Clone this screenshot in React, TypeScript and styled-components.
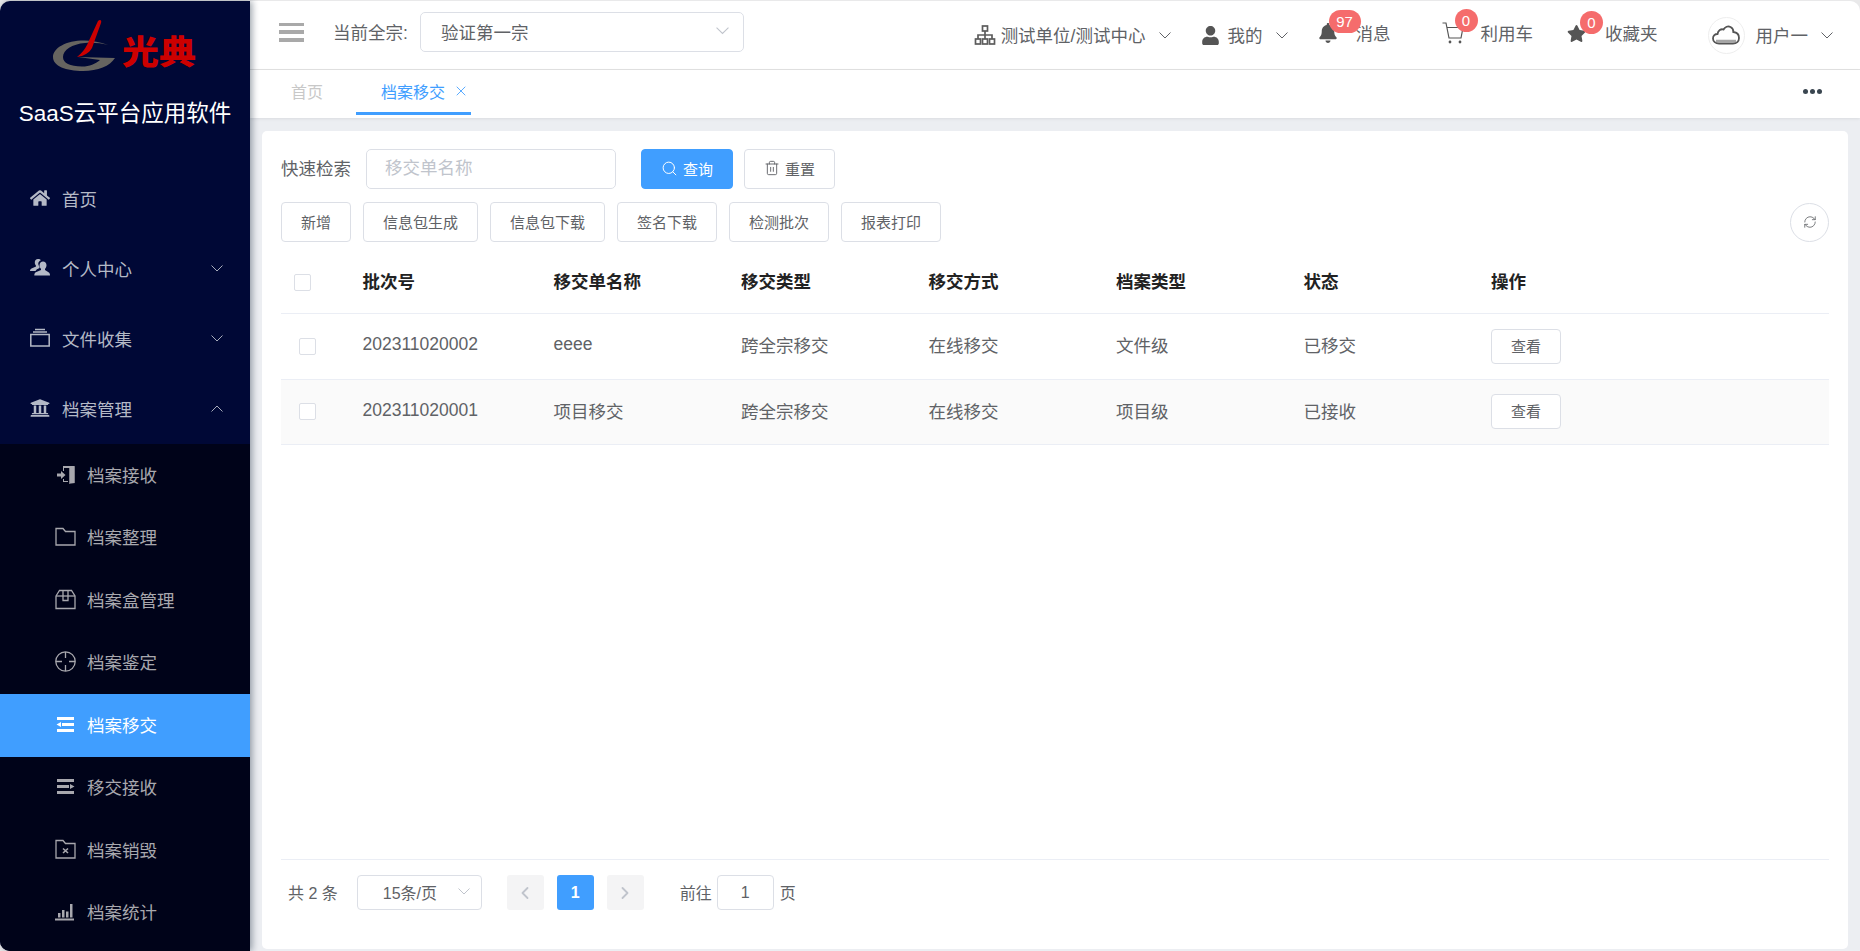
import React from 'react'
import styled, { createGlobalStyle } from 'styled-components'
import { Search, Trash2, RefreshCw, X, ChevronLeft, ChevronRight } from 'lucide-react'
import { FaHome, FaUniversity, FaUser, FaBell, FaStar } from 'react-icons/fa'

const Global = createGlobalStyle`
  html, body { margin: 0; padding: 0; height: 100%; overflow: hidden; background: #e9e9ea; }
  #root { height: 100%; }
  * { box-sizing: border-box; }
  body { font-family: "Liberation Sans", "Noto Sans CJK SC", sans-serif; }
  input { font-family: inherit; }
`

const Page = styled.div`
  display: flex;
  width: 1860px;
  height: 951px;
  padding-top: 1px;
`

const Side = styled.aside`
  position: relative;
  z-index: 2;
  width: 250px;
  flex: none;
  background: #000836;
  border-radius: 10px 0 0 10px;
  box-shadow: 2px 0 7px rgba(0, 21, 41, 0.4);
  overflow: hidden;
  display: flex;
  flex-direction: column;
`

const LogoRow = styled.div`
  height: 74px;
  padding: 17px 0 0 53px;
  display: flex;
  align-items: flex-start;
`

const LogoWord = styled.span`
  display: inline-block;
  margin: 12px 0 0 2px;
  font-size: 33px;
  line-height: 40px;
  font-weight: 900;
  color: #cc0000;
  transform: scaleX(1.12);
  transform-origin: left center;
  font-family: "Noto Sans CJK SC", sans-serif;
`

const Title = styled.div`
  height: 89px;
  padding-top: 24px;
  text-align: center;
  font-size: 22.5px;
  line-height: 30px;
  color: #fff;
`

const MenuItem = styled.div`
  height: 70px;
  padding: 0 27px 2px 30px;
  display: flex;
  align-items: center;
  font-size: 17.5px;
  color: #b4b9c6;
  svg.lead { width: 20px; height: 20px; margin-right: 12px; flex: none; }
`

const Arrow = styled.span`
  margin-left: auto;
  display: flex;
  color: #a7acbb;
`

const SubMenu = styled.div`
  flex: 1;
  background: #000319;
`

const SubItem = styled.div<{ $active?: boolean }>`
  height: 62.5px;
  padding: 0 0 2px 55px;
  display: flex;
  align-items: center;
  font-size: 17.5px;
  color: ${p => (p.$active ? '#fff' : '#a8a8ae')};
  background: ${p => (p.$active ? '#409eff' : 'transparent')};
  svg.lead { width: 21px; height: 21px; margin-right: 11px; flex: none; }
`

const Main = styled.main`
  flex: 1;
  min-width: 0;
  display: flex;
  flex-direction: column;
  background: #eceef2;
  border-radius: 0 10px 0 0;
  overflow: hidden;
`

const Header = styled.header`
  height: 69px;
  flex: none;
  display: flex;
  align-items: center;
  padding: 0 27px 6px 29px;
  background: #fff;
  border-bottom: 1px solid #e2e2e2;
  color: #606266;
  font-size: 17.5px;
`

const Burger = styled.div`
  width: 25px;
  height: 19px;
  margin-right: 29px;
  display: flex;
  flex-direction: column;
  justify-content: space-between;
  span { display: block; height: 3.5px; background: #a9a9a9; }
`

const FondLabel = styled.span`
  width: 87px;
  flex: none;
  margin-bottom: 2px;
`

const FondSelect = styled.div`
  width: 324px;
  height: 40px;
  padding: 0 14px 2px 20px;
  display: flex;
  align-items: center;
  justify-content: space-between;
  border: 1px solid #dcdfe6;
  border-radius: 5px;
  color: #606266;
  font-size: 17.5px;
`

const NavGroup = styled.div`
  margin-left: auto;
  display: flex;
  align-items: center;
`

const NavItem = styled.div<{ $ml: number; $iconGap: number; $low?: boolean }>`
  margin-left: ${p => p.$ml}px;
  margin-top: ${p => (p.$low ? '6px' : '2px')};
  display: flex;
  align-items: center;
  gap: ${p => p.$iconGap}px;
  white-space: nowrap;
`

const NavLabel = styled.span`
  margin-bottom: 2px;
`

const ChevronSlot = styled.span<{ $ml: number }>`
  margin-left: ${p => p.$ml}px;
  display: flex;
  color: #606266;
`

const IconBox = styled.span`
  position: relative;
  display: flex;
  color: #555;
`

const Badge = styled.span<{ $wide?: boolean }>`
  position: absolute;
  top: -13px;
  left: ${p => (p.$wide ? '11px' : '13px')};
  min-width: ${p => (p.$wide ? '32px' : '23px')};
  height: 23px;
  padding: 0 4px;
  border-radius: 12px;
  background: #f56c6c;
  color: #fff;
  font-size: 15px;
  line-height: 23px;
  text-align: center;
`

const Avatar = styled.span`
  width: 37px;
  height: 37px;
  border: 1px solid #eeeeee;
  border-radius: 50%;
  display: flex;
  align-items: center;
  justify-content: center;
`

const Tabs = styled.nav`
  position: relative;
  height: 48px;
  flex: none;
  padding: 0 38px 0 41px;
  display: flex;
  align-items: flex-start;
  background: #fff;
  box-shadow: 0 1px 3px rgba(0, 0, 0, 0.08);
  font-size: 16px;
`

const Tab = styled.div<{ $active?: boolean }>`
  height: 45px;
  padding: ${p => (p.$active ? '0 2px 0 25px' : '0')};
  margin-left: ${p => (p.$active ? '33px' : '0')};
  display: flex;
  align-items: center;
  gap: 8px;
  color: ${p => (p.$active ? '#409eff' : '#c8c8c8')};
  border-bottom: 3px solid ${p => (p.$active ? '#409eff' : 'transparent')};
`

const Dots = styled.div`
  margin: 19px 0 0 auto;
  display: flex;
  gap: 2px;
  span { width: 5px; height: 5px; border-radius: 50%; background: #3a4650; }
`

const Content = styled.div`
  flex: 1;
  min-height: 0;
  display: flex;
  padding: 13px 12px 2px;
`

const Card = styled.section`
  flex: 1;
  min-width: 0;
  display: flex;
  flex-direction: column;
  padding: 18px 19px 39px;
  background: #fff;
  border-radius: 5px;
  color: #606266;
`

const SearchRow = styled.div`
  display: flex;
  align-items: center;
  height: 40px;
  font-size: 17.5px;
`

const SearchLabel = styled.span`
  margin-bottom: 3px;
`

const SearchInput = styled.input`
  width: 250px;
  height: 40px;
  margin: 0 25px 0 15px;
  padding: 0 18px 2px;
  border: 1px solid #dcdfe6;
  border-radius: 5px;
  outline: none;
  font-size: 17.5px;
  color: #606266;
  &::placeholder { color: #c0c4cc; opacity: 1; }
`

const Btn = styled.button<{ $primary?: boolean; $ml?: number }>`
  height: 40px;
  padding: 0 19px 2px;
  margin-left: ${p => p.$ml ?? 0}px;
  display: inline-flex;
  align-items: center;
  justify-content: center;
  gap: 5px;
  border: 1px solid ${p => (p.$primary ? '#409eff' : '#dcdfe6')};
  border-radius: 4px;
  background: ${p => (p.$primary ? '#409eff' : '#fff')};
  color: ${p => (p.$primary ? '#fff' : '#606266')};
  font-family: inherit;
  font-size: 15px;
  white-space: nowrap;
`

const ToolRow = styled.div`
  margin-top: 13px;
  display: flex;
  align-items: center;
  gap: 12px;
`

const RoundBtn = styled.button`
  width: 39px;
  height: 39px;
  margin-left: auto;
  padding: 0;
  display: flex;
  align-items: center;
  justify-content: center;
  border: 1px solid #dcdfe6;
  border-radius: 50%;
  background: #fff;
  color: #606266;
`

const Row = styled.div<{ $head?: boolean; $striped?: boolean }>`
  height: ${p => (p.$head ? '63px' : '65.5px')};
  display: grid;
  grid-template-columns: 81.5px 191px repeat(5, 187.5px) 1fr;
  align-items: center;
  border-bottom: 1px solid #ebeef5;
  background: ${p => (p.$striped ? '#fafafa' : '#fff')};
  font-size: 17.5px;
  font-weight: ${p => (p.$head ? 700 : 400)};
  color: ${p => (p.$head ? '#222' : '#606266')};
`

const TableBox = styled.div`
  margin-top: 9px;
`

const CheckCell = styled.div<{ $head?: boolean }>`
  padding-left: ${p => (p.$head ? '13px' : '18px')};
`

const Cell = styled.div`
  margin-bottom: 3px;
`

const Check = styled.span`
  display: block;
  width: 17px;
  height: 17px;
  border: 1px solid #dcdfe6;
  border-radius: 2px;
  background: #fff;
`

const ViewBtn = styled.button`
  display: block;
  width: 70px;
  height: 35px;
  padding: 0 0 2px;
  border: 1px solid #dcdfe6;
  border-radius: 4px;
  background: #fff;
  color: #606266;
  font-family: inherit;
  font-size: 15px;
`

const Pager = styled.footer`
  margin-top: auto;
  padding: 15px 0 0 6px;
  display: flex;
  align-items: center;
  border-top: 1px solid #ebeef5;
  font-size: 16px;
  color: #606266;
`

const PageSize = styled.div`
  width: 125px;
  height: 35px;
  margin: 0 25px 0 19px;
  padding: 0 11px 2px 25px;
  display: flex;
  align-items: center;
  justify-content: space-between;
  border: 1px solid #dcdfe6;
  border-radius: 4px;
`

const PageBtn = styled.span<{ $active?: boolean }>`
  width: 37px;
  height: 35px;
  margin-right: 13px;
  display: flex;
  align-items: center;
  justify-content: center;
  border-radius: 3px;
  background: ${p => (p.$active ? '#409eff' : '#f4f4f5')};
  color: ${p => (p.$active ? '#fff' : '#c0c4cc')};
  font-size: 16px;
  font-weight: 700;
`

const PagerLabel = styled.span<{ $ml?: number }>`
  margin-left: ${p => p.$ml ?? 0}px;
  margin-bottom: 2px;
`

const JumpInput = styled.input`
  width: 57px;
  height: 35px;
  margin: 0 6px 0 5px;
  border: 1px solid #dcdfe6;
  border-radius: 4px;
  outline: none;
  text-align: center;
  font-size: 16px;
  color: #606266;
`

const Chevron = ({ up, color = 'currentColor', w = 12 }: { up?: boolean; color?: string; w?: number }) => (
  <svg width={w} height={(w * 7) / 12} viewBox="0 0 12 7" fill="none" stroke={color} strokeWidth="1">
    <polyline points={up ? '0.5,6.5 6,1 11.5,6.5' : '0.5,0.5 6,6 11.5,0.5'} />
  </svg>
)

const Logo = () => (
  <svg width="67" height="54" viewBox="53 17 67 54">
    <path
      fill="#666460"
      d="M108 44C100 41 92 39.5 84 39.5C66 39.5 53 47 53 56C53 65 66 70 83 70C98 70 110 65 115 57L78 56L100 59C95 63 90 65.5 82 65.5C70 65.5 63 62 63 56C63 49 72 43 85 42C93 41.5 101 42 108 44Z"
    />
    <path fill="#cc0000" d="M98 20C100 18 102 19 101 22L92 47C89 52 84 55 77 56C82 52 85 48 87 44Z" />
  </svg>
)

const FriendsIcon = () => (
  <svg className="lead" viewBox="0 0 20 20" fill="currentColor">
    <path d="M8 1C6 1 4.800 2.500 4.800 4.500C4.800 5.800 5.300 7 6 7.700V8.500L1.500 10.500C0.500 11 0 12 0 13H5.500C6 11.800 7.500 10.800 9.500 10V8.500C8.600 7.500 8 6.200 8.400 4.800C8.800 3.400 9.800 2.500 11 2.200C10.400 1.400 9.300 1 8 1Z" />
    <path d="M13 3.500C11 3.500 9.500 5 9.500 7.200C9.500 8.700 10.200 10 11 10.800V12L5.800 14.300C4.800 14.800 4.300 15.800 4.300 17.500H20C20 15.800 19.500 14.800 18.500 14.300L15 12V10.800C15.800 10 16.500 8.700 16.500 7.200C16.500 5 15 3.500 13 3.500Z" />
  </svg>
)

const TrayIcon = () => (
  <svg className="lead" viewBox="0 0 20 20" fill="none" stroke="currentColor" strokeWidth="1.5">
    <rect x="0.800" y="6.500" width="18.400" height="11.500" />
    <line x1="3" y1="4" x2="17" y2="4" />
    <line x1="5" y1="1.500" x2="15" y2="1.500" />
  </svg>
)

const DoorIcon = () => (
  <svg className="lead" viewBox="0 0 21 21" fill="currentColor">
    <path d="M8 2H19V19H15V4H9V7H8Z" />
    <path d="M14 3L20 2V19L14 20Z" opacity="0.75" />
    <path d="M2 9.500H6V7L10.500 11L6 15V12.500H2Z" />
    <path d="M8 15H9V17H13V18H8Z" />
  </svg>
)

const FolderIcon = () => (
  <svg className="lead" viewBox="0 0 21 21" fill="none" stroke="currentColor" strokeWidth="1.300">
    <path d="M1 2.500H8L10.500 5.500H20V19H1Z" />
  </svg>
)

const BoxIcon = () => (
  <svg className="lead" viewBox="0 0 21 21" fill="none" stroke="currentColor" strokeWidth="1.300">
    <path d="M1 7L4.500 1.500H16.500L20 7V19.500H1Z" />
    <path d="M1 7H20" />
    <path d="M8 1.500V11.500H13V1.500" />
  </svg>
)

const AimIcon = () => (
  <svg className="lead" viewBox="0 0 21 21" fill="none" stroke="currentColor" strokeWidth="1.300">
    <circle cx="10.500" cy="10.500" r="9.700" />
    <path d="M10.500 1V7M10.500 14V20M1 10.500H7M14 10.500H20" />
  </svg>
)

const FoldIcon = ({ flip }: { flip?: boolean }) => (
  <svg className="lead" viewBox="0 0 21 21" fill="currentColor" style={flip ? { transform: 'scaleX(-1)' } : undefined}>
    <path d="M2 3H19V6H2ZM7 9H19V12H7ZM2 15H19V18H2ZM6 8V13L1.500 10.500Z" />
  </svg>
)

const FolderXIcon = () => (
  <svg className="lead" viewBox="0 0 21 21" fill="none" stroke="currentColor" strokeWidth="1.300">
    <path d="M1 1.500H8L10.500 4.500H20V19H1Z" />
    <path d="M8 9.500L13 14M13 9.500L8 14" strokeWidth="1.600" />
  </svg>
)

const BarsIcon = () => (
  <svg className="lead" viewBox="0 0 21 21" fill="currentColor">
    <path d="M0 17.500H19V19.500H0ZM3 12H5.500V16.500H3ZM7 9H9.500V16.500H7ZM11 10.500H13.500V16.500H11ZM15 3H17.500V16.500H15Z" />
  </svg>
)

const OrgIcon = () => (
  <svg width="22" height="22" viewBox="0 0 22 22" fill="none" stroke="#5c5c5c" strokeWidth="1.700">
    <rect x="8.500" y="2" width="5" height="5" />
    <rect x="1.500" y="15" width="5" height="5" />
    <rect x="8.500" y="15" width="5" height="5" />
    <rect x="15.500" y="15" width="5" height="5" />
    <path d="M11 7V15M4 15V11H18V15" />
  </svg>
)

const CartIcon = () => (
  <svg width="22" height="22" viewBox="0 0 22 22" fill="none" stroke="#555" strokeWidth="1.200">
    <path d="M0.500 1H4L7 16H19L21 5.500H5" />
    <circle cx="8" cy="20" r="0.800" fill="#555" />
    <circle cx="18" cy="20" r="0.800" fill="#555" />
  </svg>
)

const CloudIcon = () => (
  <svg width="28" height="20" viewBox="0 0 28 20" fill="none" stroke="#555" strokeWidth="1.800">
    <path d="M7 18.500C3.500 18.500 1 16.300 1 13.500C1 10.800 3 9 5.500 9C6 5.500 9 3.500 11.500 4.500C13 1.800 16 0.800 18.500 2C20.500 3 21.500 5 21.300 7C24.800 7.300 27 9.800 27 13C27 16.300 24.500 18.500 21 18.500Z" />
    <path d="M4 16H24" strokeWidth="2.500" stroke="#a5a5a5" />
  </svg>
)

const rows = [
  { no: '202311020002', name: 'eeee', type: '跨全宗移交', way: '在线移交', level: '文件级', status: '已移交' },
  { no: '202311020001', name: '项目移交', type: '跨全宗移交', way: '在线移交', level: '项目级', status: '已接收' },
]

const App = () => {
  return (
    <Page>
      <Global />
      <Side>
        <LogoRow>
          <Logo />
          <LogoWord>光典</LogoWord>
        </LogoRow>
        <Title>SaaS云平台应用软件</Title>
        <MenuItem>
          <FaHome className="lead" />
          首页
        </MenuItem>
        <MenuItem>
          <FriendsIcon />
          个人中心
          <Arrow><Chevron /></Arrow>
        </MenuItem>
        <MenuItem>
          <TrayIcon />
          文件收集
          <Arrow><Chevron /></Arrow>
        </MenuItem>
        <MenuItem>
          <FaUniversity className="lead" />
          档案管理
          <Arrow><Chevron up /></Arrow>
        </MenuItem>
        <SubMenu>
          <SubItem><DoorIcon />档案接收</SubItem>
          <SubItem><FolderIcon />档案整理</SubItem>
          <SubItem><BoxIcon />档案盒管理</SubItem>
          <SubItem><AimIcon />档案鉴定</SubItem>
          <SubItem $active><FoldIcon />档案移交</SubItem>
          <SubItem><FoldIcon flip />移交接收</SubItem>
          <SubItem><FolderXIcon />档案销毁</SubItem>
          <SubItem><BarsIcon />档案统计</SubItem>
        </SubMenu>
      </Side>
      <Main>
        <Header>
          <Burger><span /><span /><span /></Burger>
          <FondLabel>当前全宗:</FondLabel>
          <FondSelect>
            验证第一宗
            <Chevron color="#c0c4cc" w={13} />
          </FondSelect>
          <NavGroup>
            <NavItem $ml={0} $iconGap={5} $low>
              <OrgIcon />
              <NavLabel>测试单位/测试中心</NavLabel>
              <ChevronSlot $ml={8}><Chevron /></ChevronSlot>
            </NavItem>
            <NavItem $ml={30} $iconGap={8} $low>
              <IconBox><FaUser size={19} /></IconBox>
              <NavLabel>我的</NavLabel>
              <ChevronSlot $ml={5}><Chevron /></ChevronSlot>
            </NavItem>
            <NavItem $ml={30} $iconGap={18}>
              <IconBox>
                <FaBell size={20} />
                <Badge $wide>97</Badge>
              </IconBox>
              <NavLabel>消息</NavLabel>
            </NavItem>
            <NavItem $ml={51} $iconGap={17}>
              <IconBox>
                <CartIcon />
                <Badge>0</Badge>
              </IconBox>
              <NavLabel>利用车</NavLabel>
            </NavItem>
            <NavItem $ml={34} $iconGap={19}>
              <IconBox>
                <FaStar size={19} />
                <Badge>0</Badge>
              </IconBox>
              <NavLabel>收藏夹</NavLabel>
            </NavItem>
            <NavItem $ml={50} $iconGap={11} $low>
              <Avatar><CloudIcon /></Avatar>
              <NavLabel>用户一</NavLabel>
              <ChevronSlot $ml={2}><Chevron /></ChevronSlot>
            </NavItem>
          </NavGroup>
        </Header>
        <Tabs>
          <Tab>首页</Tab>
          <Tab $active>
            档案移交
            <X size={16} strokeWidth={1.3} />
          </Tab>
          <Dots><span /><span /><span /></Dots>
        </Tabs>
        <Content>
          <Card>
            <SearchRow>
              <SearchLabel>快速检索</SearchLabel>
              <SearchInput placeholder="移交单名称" readOnly />
              <Btn $primary><Search size={17} strokeWidth={1.4} />查询</Btn>
              <Btn $ml={11}><Trash2 size={16} strokeWidth={1.4} />重置</Btn>
            </SearchRow>
            <ToolRow>
              <Btn>新增</Btn>
              <Btn>信息包生成</Btn>
              <Btn>信息包下载</Btn>
              <Btn>签名下载</Btn>
              <Btn>检测批次</Btn>
              <Btn>报表打印</Btn>
              <RoundBtn><RefreshCw size={14} strokeWidth={1.4} /></RoundBtn>
            </ToolRow>
            <TableBox>
              <Row $head>
                <CheckCell $head><Check /></CheckCell>
                <Cell>批次号</Cell>
                <Cell>移交单名称</Cell>
                <Cell>移交类型</Cell>
                <Cell>移交方式</Cell>
                <Cell>档案类型</Cell>
                <Cell>状态</Cell>
                <Cell>操作</Cell>
              </Row>
              {rows.map((r, i) => (
                <Row key={r.no} $striped={i % 2 === 1}>
                  <CheckCell><Check /></CheckCell>
                  <Cell>{r.no}</Cell>
                  <Cell>{r.name}</Cell>
                  <Cell>{r.type}</Cell>
                  <Cell>{r.way}</Cell>
                  <Cell>{r.level}</Cell>
                  <Cell>{r.status}</Cell>
                  <div><ViewBtn>查看</ViewBtn></div>
                </Row>
              ))}
            </TableBox>
            <Pager>
              <PagerLabel $ml={1}>共 2 条</PagerLabel>
              <PageSize>
                15条/页
                <Chevron color="#c0c4cc" />
              </PageSize>
              <PageBtn><ChevronLeft size={20} strokeWidth={2.2} /></PageBtn>
              <PageBtn $active>1</PageBtn>
              <PageBtn><ChevronRight size={20} strokeWidth={2.2} /></PageBtn>
              <PagerLabel $ml={23}>前往</PagerLabel>
              <JumpInput value="1" readOnly />
              <PagerLabel>页</PagerLabel>
            </Pager>
          </Card>
        </Content>
      </Main>
    </Page>
  )
}

export default App
